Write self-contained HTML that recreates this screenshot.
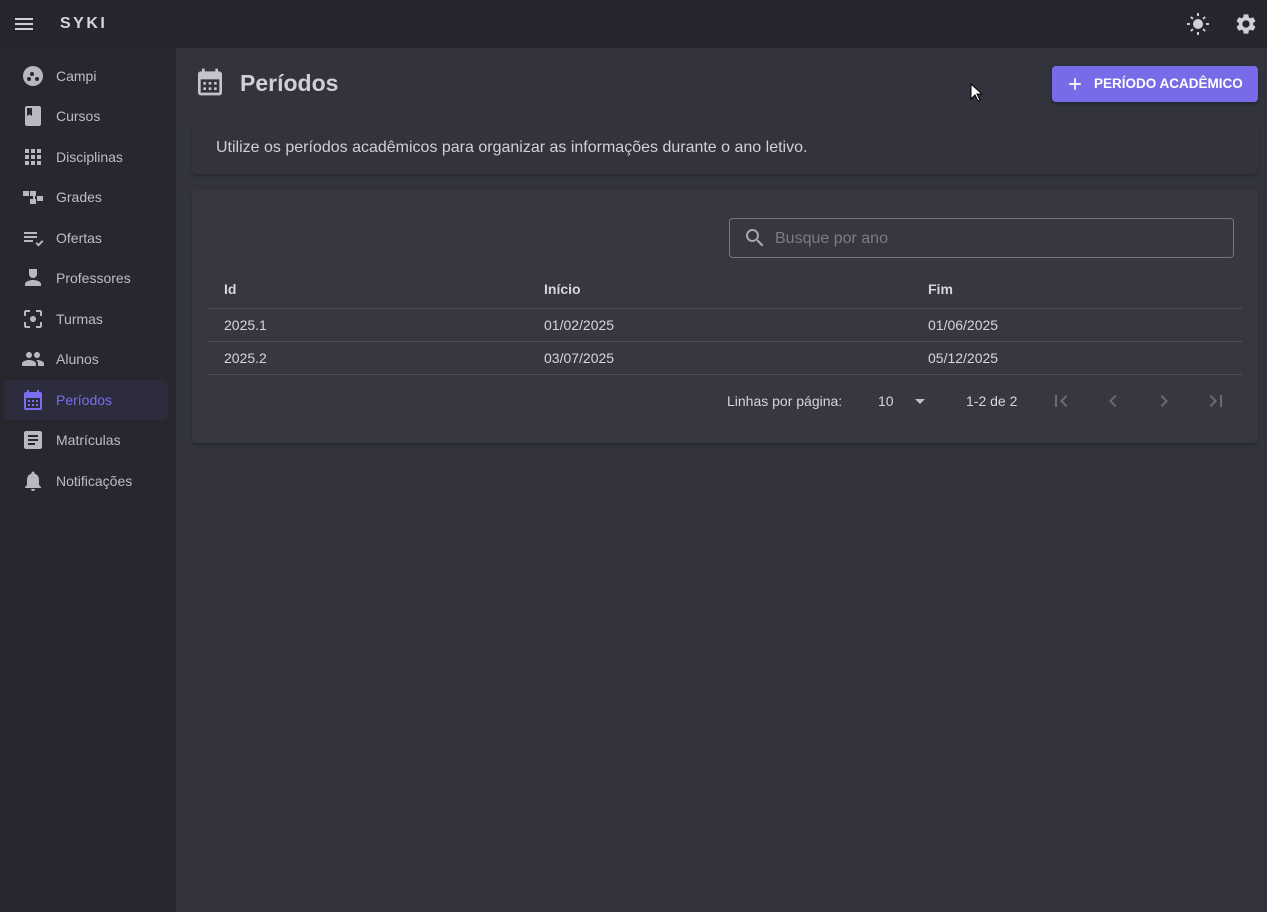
<!DOCTYPE html>
<html><head><meta charset="utf-8"><style>
*{box-sizing:border-box;margin:0;padding:0}
body{width:1267px;height:912px;background:#32333d;font-family:"Liberation Sans",Roboto,sans-serif;color:#d6d6dc;position:relative;overflow:hidden;font-size:14px}
.bar{position:absolute;left:0;top:0;width:1267px;height:48px;background:#27262f}
.side{position:absolute;left:0;top:48px;width:176px;height:864px;background:#27272f}
.nav{position:absolute;left:4px;width:164px;height:40px;border-radius:6px;display:flex;align-items:center;color:#bdbdc5;font-size:14px}
.nav svg{position:absolute;left:17px;top:8px}
.nav span{position:absolute;left:52px}
.nav.act{background:#2c2c3c;color:#7a6ef0}
.abs{position:absolute}
.card{position:absolute;background:#373740;border-radius:4px;box-shadow:0 2px 2px rgba(0,0,0,.25)}
.line{position:absolute;left:208px;width:1034px;height:1px;background:#4f4f58}
.t{position:absolute;font-size:14px;color:#d6d6dc}
</style></head><body>
<div class="bar">
<svg class="abs" style="left:12px;top:12px" width="24" height="24" viewBox="0 0 24 24" fill="#d0d0d6"><path d="M3 18h18v-2H3v2zm0-5h18v-2H3v2zm0-7v2h18V6H3z"/></svg>
<div class="abs" style="left:60px;top:15px;font-weight:bold;font-size:16px;letter-spacing:2.5px;color:#d6d6dc">SYKI</div>
<svg class="abs" style="left:1186px;top:12px" width="24" height="24" viewBox="0 0 24 24" fill="#cfcfd5"><circle cx="12" cy="12" r="5"/><path d="M11 1h2v3h-2zM11 20h2v3h-2zM1 11h3v2H1zM20 11h3v2h-3zM4.2 5.6l1.4-1.4 2 2-1.4 1.4zM16.4 17.8l1.4-1.4 2 2-1.4 1.4zM4.2 18.4l2-2 1.4 1.4-2 2zM16.4 6.2l2-2 1.4 1.4-2 2z"/></svg>
<svg class="abs" style="left:1234px;top:12px" width="24" height="24" viewBox="0 0 24 24" fill="#cfcfd5"><path d="M19.14 12.94c.04-.3.06-.61.06-.94 0-.32-.02-.64-.07-.94l2.03-1.58a.49.49 0 0 0 .12-.61l-1.920-3.32a.49.49 0 0 0-.59-.22l-2.39.96c-.5-.38-1.03-.7-1.62-.94l-.36-2.54a.484.484 0 0 0-.48-.41h-3.84c-.24 0-.43.17-.47.41l-.36 2.54c-.59.24-1.13.57-1.62.94l-2.39-.96c-.22-.08-.47 0-.59.22L2.74 8.870c-.12.21-.08.47.12.61l2.03 1.58c-.05.3-.09.63-.09.94s.02.64.07.94l-2.03 1.58a.49.49 0 0 0-.12.61l1.92 3.32c.12.22.37.29.59.22l2.39-.96c.5.38 1.03.7 1.62.94l.36 2.54c.05.24.24.41.48.41h3.84c.24 0 .44-.17.47-.41l.36-2.54c.59-.24 1.13-.56 1.62-.94l2.39.96c.22.08.47 0 .59-.22l1.92-3.32c.12-.22.07-.47-.12-.61l-2.01-1.58zM12 15.6c-1.98 0-3.6-1.62-3.6-3.6s1.62-3.6 3.6-3.6 3.6 1.62 3.6 3.6-1.62 3.6-3.6 3.6z"/></svg>
</div>
<div class="side">
<div class="nav" style="top:8px"><svg width="24" height="24" viewBox="0 0 24 24" fill="#b8b8c0"><path d="M12 2a10 10 0 1 0 0 20 10 10 0 0 0 0-20zM8 17a2 2 0 1 1 0-4 2 2 0 0 1 0 4zm1-7a2 2 0 1 1 4 0 2 2 0 0 1-4 0zm7 7a2 2 0 1 1 0-4 2 2 0 0 1 0 4z" fill-rule="evenodd"/></svg><span>Campi</span></div>
<div class="nav" style="top:48px"><svg width="24" height="24" viewBox="0 0 24 24" fill="#b8b8c0"><path d="M18 2H6c-1.1 0-2 .9-2 2v16c0 1.1.9 2 2 2h12c1.1 0 2-.9 2-2V4c0-1.1-.9-2-2-2zM6 4h5v8l-2.5-1.5L6 12V4z"/></svg><span>Cursos</span></div>
<div class="nav" style="top:89px"><svg width="24" height="24" viewBox="0 0 24 24" fill="#b8b8c0"><path d="M4 8h4V4H4v4zm6 12h4v-4h-4v4zm-6 0h4v-4H4v4zm0-6h4v-4H4v4zm6 0h4v-4h-4v4zm6-10v4h4V4h-4zm-6 4h4V4h-4v4zm6 6h4v-4h-4v4zm0 6h4v-4h-4v4z"/></svg><span>Disciplinas</span></div>
<div class="nav" style="top:129px"><svg width="24" height="24" viewBox="0 0 24 24" fill="#b8b8c0"><path d="M2 6h6v5H2zM9 6h6v5h-1v3h1v5H9v-5h3v-3H9zM16 11h6v5h-6z"/></svg><span>Grades</span></div>
<div class="nav" style="top:170px"><svg width="24" height="24" viewBox="0 0 24 24" fill="#b8b8c0"><path d="M3 6h13v2H3zM3 10h13v2H3zM3 14h9v2H3zm11.5 3.5l1.4-1.4 1.6 1.6 3.6-3.6 1.4 1.4-5 5z"/></svg><span>Ofertas</span></div>
<div class="nav" style="top:210px"><svg width="24" height="24" viewBox="0 0 24 24" fill="#b8b8c0"><path d="M8 3h8v5a4 4 0 0 1-8 0zM4 20v-2c0-2.7 5.3-4 8-4s8 1.3 8 4v2z"/></svg><span>Professores</span></div>
<div class="nav" style="top:251px"><svg width="24" height="24" viewBox="0 0 24 24" fill="#b8b8c0"><path d="M5 15H3v4c0 1.1.9 2 2 2h4v-2H5v-4zM5 5h4V3H5c-1.1 0-2 .9-2 2v4h2V5zm14-2h-4v2h4v4h2V5c0-1.1-.9-2-2-2zm0 16h-4v2h4c1.1 0 2-.9 2-2v-4h-2v4zM12 9c-1.66 0-3 1.34-3 3s1.34 3 3 3 3-1.34 3-3-1.34-3-3-3z"/></svg><span>Turmas</span></div>
<div class="nav" style="top:291px"><svg width="24" height="24" viewBox="0 0 24 24" fill="#b8b8c0"><path d="M16 11c1.66 0 2.99-1.340 2.99-3S17.66 5 16 5c-1.66 0-3 1.34-3 3s1.34 3 3 3zm-8 0c1.66 0 2.99-1.34 2.99-3S9.66 5 8 5C6.34 5 5 6.34 5 8s1.34 3 3 3zm0 2c-2.33 0-7 1.17-7 3.5V19h14v-2.5c0-2.33-4.67-3.5-7-3.5zm8 0c-.29 0-.62.02-.97.05 1.16.84 1.970 1.97 1.97 3.45V19h6v-2.5c0-2.33-4.67-3.5-7-3.5z"/></svg><span>Alunos</span></div>
<div class="nav act" style="top:332px"><svg width="24" height="24" viewBox="0 0 24 24" fill="#7a6ef0"><path d="M19 4h-1V2h-2v2H8V2H6v2H5a2 2 0 0 0-2 2v14a2 2 0 0 0 2 2h14a2 2 0 0 0 2-2V6a2 2 0 0 0-2-2zm0 16H5V10h14zM7 12h2v2H7zm4 0h2v2h-2zm4 0h2v2h-2zM7 16h2v2H7zm4 0h2v2h-2zm4 0h2v2h-2z"/></svg><span>Períodos</span></div>
<div class="nav" style="top:372px"><svg width="24" height="24" viewBox="0 0 24 24" fill="#b8b8c0"><path d="M19 3H5c-1.1 0-2 .9-2 2v14c0 1.1.9 2 2 2h14c1.1 0 2-.9 2-2V5c0-1.1-.9-2-2-2zm-5 14H7v-2h7v2zm3-4H7v-2h10v2zm0-4H7V7h10v2z"/></svg><span>Matrículas</span></div>
<div class="nav" style="top:413px"><svg width="24" height="24" viewBox="0 0 24 24" fill="#b8b8c0"><path d="M12 22c1.1 0 2-.9 2-2h-4c0 1.1.89 2 2 2zm6-6v-5c0-3.07-1.64-5.64-4.5-6.32V4c0-.83-.67-1.5-1.5-1.5s-1.5.67-1.5 1.5v.68C7.63 5.36 6 7.920 6 11v5l-2 2v1h16v-1l-2-2z"/></svg><span>Notificações</span></div>
</div>

<svg class="abs" style="left:194px;top:66px" width="32" height="32" viewBox="0 0 24 24" fill="#c4c4ca"><path d="M19 4h-1V2h-2v2H8V2H6v2H5a2 2 0 0 0-2 2v14a2 2 0 0 0 2 2h14a2 2 0 0 0 2-2V6a2 2 0 0 0-2-2zm0 16H5V10h14zM7 12h2v2H7zm4 0h2v2h-2zm4 0h2v2h-2zM7 16h2v2H7zm4 0h2v2h-2zm4 0h2v2h-2z"/></svg>
<div class="abs" style="left:240px;top:70px;font-size:23px;font-weight:bold;color:#cfcfd5">Períodos</div>
<div class="abs" style="left:1052px;top:66px;width:206px;height:36px;background:#776be7;border-radius:4px;box-shadow:0 2px 3px rgba(0,0,0,.3);color:#fff;font-weight:bold;font-size:13.5px;letter-spacing:0">
<svg class="abs" style="left:13px;top:8px" width="20" height="20" viewBox="0 0 24 24" fill="#fff"><path d="M19 13h-6v6h-2v-6H5v-2h6V5h2v6h6v2z"/></svg>
<span class="abs" style="left:42px;top:10px">PERÍODO ACADÊMICO</span></div>
<svg class="abs" style="left:970px;top:83px" width="12" height="20" viewBox="0 0 12 20"><path d="M1 1v15l4-4 3 6 2-1-3-6h5z" fill="#fff" stroke="#000" stroke-width="1"/></svg>

<div class="card" style="left:192px;top:122px;width:1066px;height:52px;background:#33333d"></div>
<div class="abs" style="left:216px;top:139px;font-size:16px;color:#d0d0d6">Utilize os períodos acadêmicos para organizar as informações durante o ano letivo.</div>

<div class="card" style="left:192px;top:190px;width:1066px;height:253px"></div>
<div class="abs" style="left:729px;top:218px;width:505px;height:40px;border:1px solid #75757d;border-radius:4px"></div>
<svg class="abs" style="left:743px;top:226px" width="24" height="24" viewBox="0 0 24 24" fill="#a8a8b0"><path d="M15.5 14h-.79l-.28-.27A6.471 6.471 0 0 0 16 9.5 6.5 6.5 0 1 0 9.5 16c1.61 0 3.09-.59 4.23-1.57l.27.28v.79l5 4.99L20.49 19l-4.99-5zm-6 0C7.01 14 5 11.99 5 9.5S7.01 5 9.5 5 14 7.01 14 9.5 11.99 14 9.5 14z"/></svg>
<div class="abs" style="left:775px;top:230px;font-size:16px;color:#7c7c85">Busque por ano</div>

<div class="t" style="left:224px;top:281px;font-weight:bold">Id</div>
<div class="t" style="left:544px;top:281px;font-weight:bold">Início</div>
<div class="t" style="left:928px;top:281px;font-weight:bold">Fim</div>
<div class="line" style="top:308px"></div>
<div class="t" style="left:224px;top:317px">2025.1</div>
<div class="t" style="left:544px;top:317px">01/02/2025</div>
<div class="t" style="left:928px;top:317px">01/06/2025</div>
<div class="line" style="top:341px"></div>
<div class="t" style="left:224px;top:350px">2025.2</div>
<div class="t" style="left:544px;top:350px">03/07/2025</div>
<div class="t" style="left:928px;top:350px">05/12/2025</div>
<div class="line" style="top:374px"></div>

<div class="t" style="left:727px;top:393px">Linhas por página:</div>
<div class="t" style="left:878px;top:393px">10</div>
<svg class="abs" style="left:908px;top:389px" width="24" height="24" viewBox="0 0 24 24" fill="#c0c0c8"><path d="M7 10l5 5 5-5z"/></svg>
<div class="t" style="left:966px;top:393px">1-2 de 2</div>
<svg class="abs" style="left:1049px;top:389px" width="24" height="24" viewBox="0 0 24 24" fill="#6a6a72"><path d="M18.41 16.59L13.82 12l4.59-4.59L17 6l-6 6 6 6zM6 6h2v12H6z"/></svg>
<svg class="abs" style="left:1101px;top:389px" width="24" height="24" viewBox="0 0 24 24" fill="#6a6a72"><path d="M15.41 7.41L14 6l-6 6 6 6 1.41-1.41L10.83 12z"/></svg>
<svg class="abs" style="left:1152px;top:389px" width="24" height="24" viewBox="0 0 24 24" fill="#6a6a72"><path d="M10 6L8.59 7.41 13.17 12l-4.58 4.59L10 18l6-6z"/></svg>
<svg class="abs" style="left:1204px;top:389px" width="24" height="24" viewBox="0 0 24 24" fill="#6a6a72"><path d="M5.59 7.41L10.18 12l-4.59 4.59L7 18l6-6-6-6zM16 6h2v12h-2z"/></svg>
</body></html>
